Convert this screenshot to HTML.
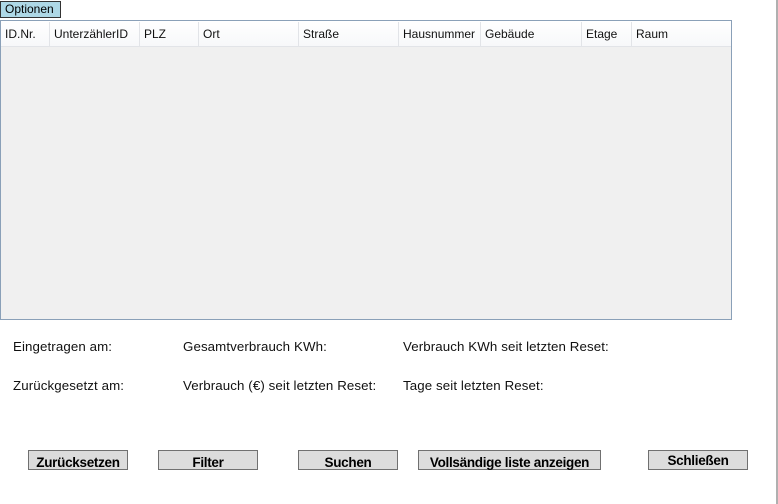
<!DOCTYPE html>
<html><head><style>
body{margin:0;width:778px;height:504px;background:#fff;font-family:"Liberation Sans",sans-serif;position:relative;overflow:hidden}
.a{position:absolute}
#opt{left:0;top:1px;width:61px;height:17px;background:#aed8e6;border:1px solid #333;box-sizing:border-box;font-size:12px;line-height:15px;padding-left:4px;color:#000}
#grid{left:0;top:20px;width:732px;height:300px;border:1px solid #8aa0b8;box-sizing:border-box;background:#f0f0f0}
#hdr{left:0;top:0;width:730px;height:25px;background:linear-gradient(#fff,#f7f8fa);border-bottom:1px solid #e2e4e8}
.h{position:absolute;top:1px;height:24px;line-height:25px;font-size:12px;color:#111;padding-left:4px;border-right:1px solid #e2e4e8;box-sizing:border-box}
.l{position:absolute;font-size:13.3px;color:#111;letter-spacing:0.1px}
.b{position:absolute;top:450px;height:20px;background:#dcdcdc;border:1px solid #707070;box-sizing:border-box;font-weight:bold;font-size:13.5px;text-align:center;line-height:23px;letter-spacing:-0.3px;color:#000}
</style></head><body>
<div class="a" id="opt">Optionen</div>
<div class="a" id="grid"><div class="a" id="hdr">
<div class="h" style="left:0;width:49px">ID.Nr.</div>
<div class="h" style="left:49px;width:90px">UnterzählerID</div>
<div class="h" style="left:139px;width:59px">PLZ</div>
<div class="h" style="left:198px;width:100px">Ort</div>
<div class="h" style="left:298px;width:100px">Straße</div>
<div class="h" style="left:398px;width:82px">Hausnummer</div>
<div class="h" style="left:480px;width:101px">Gebäude</div>
<div class="h" style="left:581px;width:50px">Etage</div>
<div class="h" style="left:631px;width:99px;border-right:none">Raum</div>
</div></div>
<div class="a" style="left:776px;top:0;width:2px;height:504px;background:#b0b0b0"></div>
<div class="l" style="left:13px;top:339px">Eingetragen am:</div>
<div class="l" style="left:183px;top:339px">Gesamtverbrauch KWh:</div>
<div class="l" style="left:403px;top:339px">Verbrauch KWh seit letzten Reset:</div>
<div class="l" style="left:13px;top:378px">Zurückgesetzt am:</div>
<div class="l" style="left:183px;top:378px">Verbrauch (€) seit letzten Reset:</div>
<div class="l" style="left:403px;top:378px">Tage seit letzten Reset:</div>
<div class="b" style="left:28px;width:100px">Zurücksetzen</div>
<div class="b" style="left:158px;width:100px">Filter</div>
<div class="b" style="left:298px;width:100px">Suchen</div>
<div class="b" style="left:418px;width:183px">Vollsändige liste anzeigen</div>
<div class="b" style="left:648px;width:100px;line-height:20px">Schließen</div>
</body></html>
